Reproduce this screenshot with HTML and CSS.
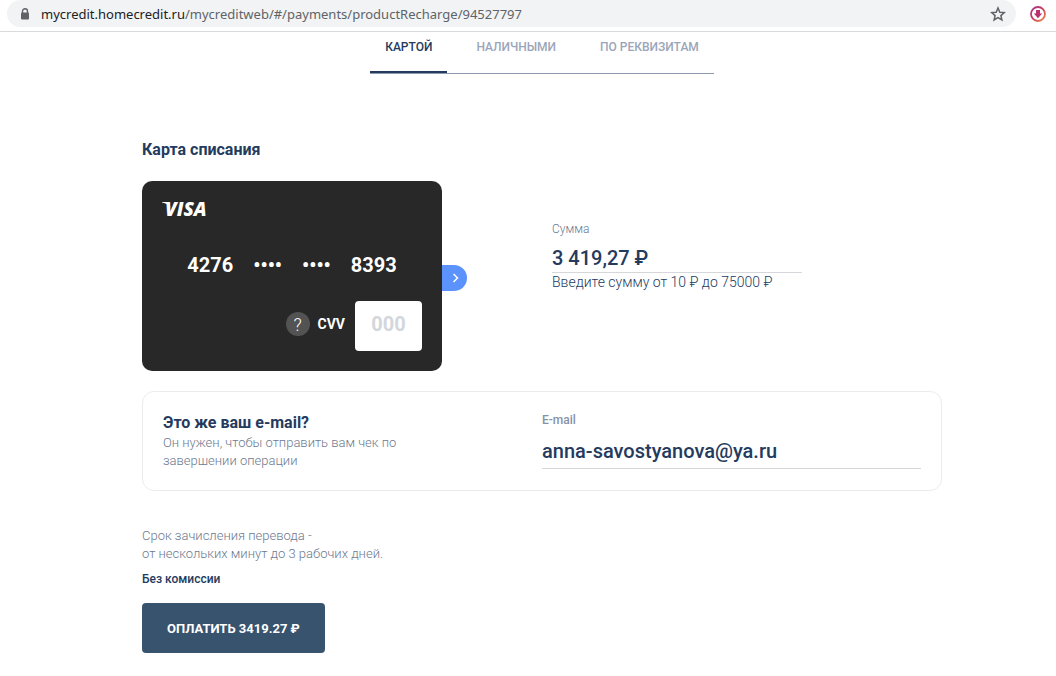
FILE: index.html
```html
<!doctype html>
<html lang="ru">

<head>
  <meta charset="utf-8">
  <title>Пополнение картой</title>
  <meta name="viewport" content="width=device-width, initial-scale=1">
  <link rel="stylesheet" href="styles.css">
</head>

<body>
  <header class="toolbar">
    <div class="address">
      <svg class="lock" viewBox="0 0 10 12" width="10" height="12">
        <path d="M2.5 5V3.2a2.5 2.5 0 0 1 5 0V5" fill="none" stroke="#5f6368" stroke-width="1.4" />
        <rect x="1" y="4.5" width="8" height="7" rx="1" fill="#5f6368" />
      </svg>
      <span class="url"><span class="url_host">mycredit.homecredit.ru</span>/mycreditweb/#/payments/productRecharge/94527797</span>
      <button class="icon_button" type="button" aria-label="Добавить в закладки">
        <svg viewBox="0 0 16 16" width="16" height="16">
          <path d="M8 2l1.8 4.2 4.5.4-3.4 3 1 4.4L8 11.7 4.1 14l1-4.400-3.400-3 4.500-.4z" fill="none" stroke="#5f6368" stroke-width="1.5" />
        </svg>
      </button>
    </div>
    <button class="icon_button" type="button" aria-label="Загрузки">
      <svg viewBox="0 0 16 16" width="16" height="16">
        <defs>
          <linearGradient id="ring" x1="0" y1="0" x2="1" y2="1">
            <stop offset="0" stop-color="#a8328c" />
            <stop offset="0.5" stop-color="#c9415c" />
            <stop offset="1" stop-color="#ee8c4c" />
          </linearGradient>
        </defs>
        <circle cx="8" cy="8" r="7" fill="#fff" stroke="url(#ring)" stroke-width="1.8" />
        <path d="M6 4h4v3.5h2.200L8 12.300 3.800 7.500H6z" fill="#b93370" />
      </svg>
    </button>
  </header>

  <main class="page">
    <nav class="tabs">
      <a class="tab tab_active" href="#card">Картой</a>
      <a class="tab" href="#cash">Наличными</a>
      <a class="tab" href="#details">По реквизитам</a>
    </nav>

    <form class="payment">
      <h2 class="title">Карта списания</h2>

      <div class="source">
        <div class="card">
          <svg class="visa" viewBox="0 0 60 24" width="60" height="24" role="img" aria-label="VISA">
            <path d="M0 1h6.500l2 5.500C7 3.500 4 2 0 1.400z" fill="#fff" />
            <text x="3" y="15" class="visa_text">VISA</text>
          </svg>
          <div class="card_number">
            <span>4276</span>
            <span>••••</span>
            <span>••••</span>
            <span>8393</span>
          </div>
          <div class="card_cvv">
            <div class="cvv_text">
              <button class="help" type="button">?</button>
              <label for="cvv">CVV</label>
            </div>
            <input class="cvv" id="cvv" type="text" placeholder="000" maxlength="3">
          </div>
          <button class="next" type="button" aria-label="Следующая карта">
            <svg viewBox="0 0 8 12" width="8" height="12">
              <path d="M1.500 2l4 4-4 4" fill="none" stroke="#fff" stroke-width="1.500" />
            </svg>
          </button>
        </div>

        <div class="amount">
          <label class="amount_label" for="amount">Сумма</label>
          <input class="field" id="amount" type="text" value="3 419,27 ₽">
          <p class="amount_hint">Введите сумму от 10 ₽ до 75000 ₽</p>
        </div>
      </div>

      <div class="mail">
        <div class="mail_text">
          <h3 class="title">Это же ваш e-mail?</h3>
          <p class="note">Он нужен, чтобы отправить вам чек по завершении операции</p>
        </div>
        <div class="mail_field">
          <label class="mail_label" for="email">E-mail</label>
          <input class="field" id="email" type="email" value="anna-savostyanova@ya.ru">
        </div>
      </div>

      <p class="note">Срок зачисления перевода -<br>от нескольких минут до 3 рабочих дней.</p>
      <p class="fee">Без комиссии</p>
      <button class="pay" type="submit">Оплатить 3419.27 ₽</button>
    </form>
  </main>
</body>

</html>
```
FILE: styles.css
```css
* {
  box-sizing: border-box;
  margin: 0;
}

body {
  font-family: Roboto, sans-serif;
  color: #243b5e;
  background: #fff;
}

button,
input {
  font-family: inherit;
  border: 0;
  padding: 0;
}

.toolbar {
  display: flex;
  gap: 14px;
  height: 32px;
  padding: 0 10px 4px 7px;
  border-bottom: 1px solid #d9dadc;
}

.address {
  flex: 1;
  display: flex;
  align-items: center;
  padding: 0 10px 0 13px;
  border-radius: 14px;
  background: #f1f3f4;
}

.url {
  flex: 1;
  margin-left: 11px;
  font: 13px/20px "Noto Sans", "Open Sans", sans-serif;
  color: #5f6368;
}

.url_host {
  color: #202124;
}

.icon_button {
  display: flex;
  align-items: center;
  background: none;
}

.page {
  padding: 0 0 23px 28px;
}

.tabs {
  display: flex;
  gap: 14px;
  width: max-content;
  margin: 0 auto;
  border-bottom: 1px solid #8e99ad;
}

.tab {
  height: 41px;
  padding: 7px 15px 0;
  border-bottom: 2px solid transparent;
  font-size: 12px;
  line-height: 16px;
  font-weight: 500;
  text-transform: uppercase;
  text-decoration: none;
  color: #9ba5b9;
}

.tab_active {
  color: #243b5e;
  border-color: #243b5e;
}

.payment {
  max-width: 800px;
  margin: 65px auto 0;
}

.title {
  font-size: 16px;
  line-height: 22px;
  font-weight: 700;
}

.source {
  display: flex;
  gap: 110px;
  margin: 20px 0;
}

.card {
  position: relative;
  width: 300px;
  height: 190px;
  padding: 20px;
  border-radius: 10px;
  background: #282828;
  color: #fff;
}

.visa {
  display: block;
}

.visa_text {
  font: italic 800 19px "Open Sans", sans-serif;
  fill: #fff;
}

.card_number {
  display: flex;
  justify-content: center;
  gap: 20px;
  margin-top: 28px;
  font-size: 20px;
  line-height: 24px;
  font-weight: 700;
}

.card_cvv {
  display: flex;
  justify-content: flex-end;
  gap: 10px;
  margin-top: 24px;
}

.cvv_text {
  display: flex;
  align-items: center;
  gap: 8px;
  padding-bottom: 4px;
  font-size: 14px;
  font-weight: 700;
}

.help {
  width: 24px;
  height: 24px;
  border-radius: 50%;
  background: #535353;
  color: #fff;
  font-size: 18px;
  font-weight: 300;
}

.cvv {
  width: 67px;
  height: 50px;
  padding-bottom: 4px;
  border-radius: 4px;
  background: #fff;
  color: #243b5e;
  font-size: 20px;
  font-weight: 700;
  text-align: center;
}

.cvv::placeholder {
  color: #d3d7dc;
}

.next {
  position: absolute;
  left: 100%;
  top: 84px;
  display: flex;
  align-items: center;
  justify-content: center;
  width: 25px;
  height: 26px;
  padding-left: 2px;
  border-radius: 0 13px 13px 0;
  background: #5c92fc;
}

.amount {
  width: 250px;
  padding-top: 40px;
}

.amount_label {
  display: block;
  font-size: 12px;
  line-height: 16px;
  font-weight: 300;
  color: #6d7a8f;
}

.field {
  display: block;
  width: 100%;
  height: 30px;
  margin-top: 6px;
  border-bottom: 1px solid #d5d7da;
  background: none;
  color: #243b5e;
  font-size: 20px;
  font-weight: 500;
}

.amount_hint {
  font-size: 14px;
  line-height: 18px;
  font-weight: 300;
}

.mail {
  display: flex;
  margin-bottom: 36px;
  padding: 20px;
  border: 1px solid #ebecee;
  border-radius: 12px;
}

.mail_text,
.mail_field {
  flex: 1;
}

.mail_text .note {
  max-width: 240px;
}

.mail_label {
  display: block;
  font-size: 12px;
  line-height: 16px;
  font-weight: 500;
  color: #8592a6;
}

.mail_field .field {
  height: 35px;
}

.note {
  font-size: 13px;
  line-height: 18px;
  font-weight: 300;
  color: #6d7a8f;
}

.fee {
  margin: 8px 0 16px;
  font-size: 12px;
  line-height: 16px;
  font-weight: 500;
}

.pay {
  height: 50px;
  padding: 0 25px;
  border-radius: 4px;
  background: #37536d;
  color: #fff;
  font-size: 13px;
  font-weight: 700;
  text-transform: uppercase;
}
```
